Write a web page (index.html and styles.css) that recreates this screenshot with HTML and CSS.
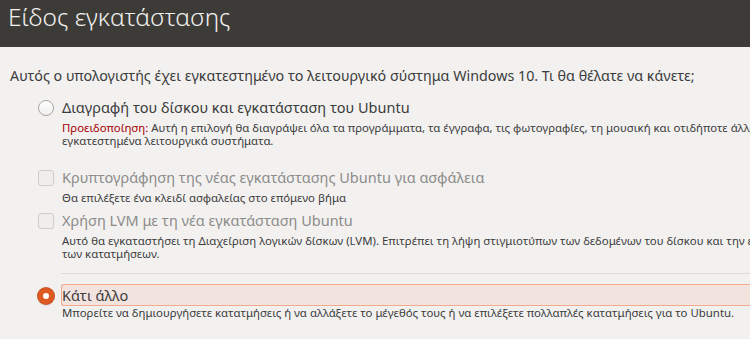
FILE: index.html
```html
<!DOCTYPE html>
<html lang="el">
<head>
  <meta charset="UTF-8">
  <title>Είδος εγκατάστασης</title>
  <link rel="stylesheet" href="styles.css">
</head>
<body>
  <div class="header">
    <h1>Είδος εγκατάστασης</h1>
  </div>

  <div class="content">
    <p class="question">Αυτός ο υπολογιστής έχει εγκατεστημένο το λειτουργικό σύστημα Windows 10. Τι θα θέλατε να κάνετε;</p>

    <div class="options">
      <!-- Erase disk -->
      <div class="option">
        <span class="radio"></span>
        <div class="text">
          <div class="label">Διαγραφή του δίσκου και εγκατάσταση του Ubuntu</div>
          <div class="desc"><span class="warn">Προειδοποίηση:</span> Αυτή η επιλογή θα διαγράψει όλα τα προγράμματα, τα έγγραφα, τις φωτογραφίες, τη μουσική και οτιδήποτε άλλο αρχείο σε όλα τα<br>εγκατεστημένα λειτουργικά συστήματα.</div>
        </div>
      </div>

      <!-- Advanced features -->
      <div class="sub-group">
        <div class="option disabled">
          <span class="check"></span>
          <div class="text">
            <div class="label">Κρυπτογράφηση της νέας εγκατάστασης Ubuntu για ασφάλεια</div>
            <div class="desc">Θα επιλέξετε ένα κλειδί ασφαλείας στο επόμενο βήμα</div>
          </div>
        </div>
        <div class="option disabled">
          <span class="check"></span>
          <div class="text">
            <div class="label">Χρήση LVM με τη νέα εγκατάσταση Ubuntu</div>
            <div class="desc">Αυτό θα εγκαταστήσει τη Διαχείριση λογικών δίσκων (LVM). Επιτρέπει τη λήψη στιγμιοτύπων των δεδομένων του δίσκου και την ευκολότερη αλλαγή μεγέθους<br>των κατατμήσεων.</div>
          </div>
        </div>
      </div>

      <div class="separator"></div>

      <!-- Something else -->
      <div class="option selected">
        <span class="radio checked"></span>
        <div class="text">
          <div class="label">Κάτι άλλο</div>
          <div class="desc">Μπορείτε να δημιουργήσετε κατατμήσεις ή να αλλάξετε το μέγεθός τους ή να επιλέξετε πολλαπλές κατατμήσεις για το Ubuntu.</div>
        </div>
      </div>
    </div>
  </div>
</body>
</html>
```

FILE: styles.css
```css
body {
  margin: 0;
  width: 750px;
  height: 339px;
  overflow: hidden;
  background-color: #f2f1f0;
  font-family: "Noto Sans", "DejaVu Sans", sans-serif;
  color: #3c3c3c;
}

.header {
  height: 47px;
  background-color: #3c3b37;
  padding-left: 8px;
}

h1 {
  margin: 0;
  font-size: 24.5px;
  font-weight: 300;
  line-height: 34px;
  color: #f2f1f0;
  white-space: nowrap;
}

.content {
  padding-left: 10px;
  width: 900px;
}

.question {
  margin: 19px 0 0;
  font-size: 14.3px;
  line-height: 20px;
  white-space: nowrap;
}

.options {
  margin-top: 11px;
  margin-left: 28px;
}

.option {
  display: flex;
  gap: 8px;
}

.text {
  flex: 1;
}

.label {
  font-size: 14.5px;
  line-height: 20px;
  white-space: nowrap;
}

.desc {
  margin-top: 4px;
  font-size: 11.4px;
  line-height: 13px;
  white-space: nowrap;
}

.warn {
  color: #a40000;
}

.radio {
  width: 14px;
  height: 14px;
  margin-top: 3px;
  border: 1px solid #a7a6a3;
  border-radius: 50%;
  background: linear-gradient(#ffffff, #f0efee);
  flex-shrink: 0;
}

.radio.checked {
  width: 6px;
  height: 6px;
  border: 5px solid #dd5a22;
  background: #fff;
  margin-top: 4px;
  box-shadow: 0 0 0 1px #c8511e, 0 2px 2px rgba(0, 0, 0, 0.08);
}

.check {
  width: 14px;
  height: 14px;
  margin-top: 3px;
  border: 1px solid #cfcdca;
  border-radius: 3px;
  background-color: #efeeec;
  flex-shrink: 0;
}

.sub-group {
  margin-top: 20px;
  display: flex;
  flex-direction: column;
  gap: 6px;
}

.disabled .label {
  color: #8d8c8a;
}

.separator {
  margin: 13px 0 10px 23px;
  height: 1px;
  background-color: #dcdad6;
}

.selected .label {
  background-color: #f2e3df;
  border: 1px solid #f4ab8c;
  border-right: none;
  border-radius: 3px 0 0 3px;
  margin-left: -1px;
}

.selected .desc {
  margin-top: 0;
}
```
